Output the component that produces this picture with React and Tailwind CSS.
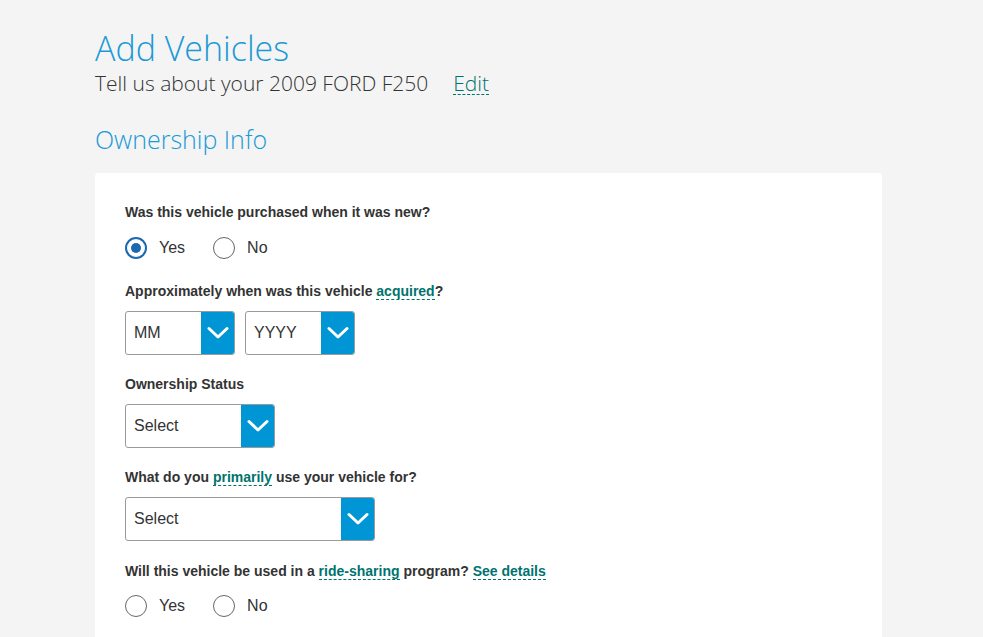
import { useState } from 'react';

function Chevron() {
  return (
    <svg width="22" height="14" viewBox="0 0 22 14" fill="none">
      <path d="M2 2.5l9 8.5 9-8.5" stroke="white" strokeWidth="3" strokeLinecap="round" strokeLinejoin="round" />
    </svg>
  );
}

function SelectBox({ placeholder, width }) {
  return (
    <div className={`flex h-[44px] ${width} overflow-hidden rounded-[3px] border border-[#9a9a9a] bg-white`}>
      <div className="flex flex-1 items-center pl-2 text-[16px] text-[#333]">{placeholder}</div>
      <div className="flex w-[33px] items-center justify-center bg-[#0096d6]">
        <Chevron />
      </div>
    </div>
  );
}

function Tip({ children }) {
  return (
    <span className="border-b border-dashed border-[#00736f] text-[#00736f]">{children}</span>
  );
}

function Radio({ checked, label, onClick }) {
  return (
    <button type="button" onClick={onClick} className="flex items-center gap-3">
      <span
        className={`flex h-[22px] w-[22px] items-center justify-center rounded-full bg-white ${
          checked ? 'border-2 border-[#1c68b3]' : 'border-[1.5px] border-[#666]'
        }`}
      >
        {checked && <span className="h-[10px] w-[10px] rounded-full bg-[#1c68b3]" />}
      </span>
      <span className="text-[16px] text-[#333]">{label}</span>
    </button>
  );
}

function RadioGroup({ value, onChange, className }) {
  return (
    <div className={`flex gap-[28px] ${className}`}>
      <Radio checked={value === 'yes'} label="Yes" onClick={() => onChange('yes')} />
      <Radio checked={value === 'no'} label="No" onClick={() => onChange('no')} />
    </div>
  );
}

function Label({ children }) {
  return <p className="text-[14px] font-bold leading-[16px] text-[#333]">{children}</p>;
}

export default function App() {
  const [isNew, setIsNew] = useState('yes');
  const [rideShare, setRideShare] = useState(null);

  return (
    <div className="min-h-screen bg-[#f4f4f4] font-['Liberation_Sans',Arial,sans-serif]">
      <div className="ml-[95px] w-[787px] pt-[28px]">
        <h1 className="font-['Open_Sans',sans-serif] text-[34px] font-light leading-[40px] text-[#1a9ad6]">
          Add Vehicles
        </h1>
        <p className="flex items-center font-['Open_Sans',sans-serif] text-[21px] font-light text-[#333]">
          Tell us about your 2009 FORD F250
          <span className="ml-[25px] border-b border-dashed border-[#00736f] leading-[22px] text-[#00736f]">Edit</span>
        </p>
        <h2 className="mt-[24px] font-['Open_Sans',sans-serif] text-[25px] font-light leading-[30px] text-[#1a9ad6]">
          Ownership Info
        </h2>

        <div className="mt-[19px] rounded-[4px] bg-white px-[30px] pt-[31px] pb-[40px]">
          <Label>Was this vehicle purchased when it was new?</Label>
          <RadioGroup className="mt-[16px]" value={isNew} onChange={setIsNew} />

          <div className="mt-[23px]">
            <Label>
              Approximately when was this vehicle <Tip>acquired</Tip>?
            </Label>
            <div className="mt-[12px] flex gap-[10px]">
              <SelectBox placeholder="MM" width="w-[110px]" />
              <SelectBox placeholder="YYYY" width="w-[110px]" />
            </div>
          </div>

          <div className="mt-[21px]">
            <Label>Ownership Status</Label>
            <div className="mt-[12px]">
              <SelectBox placeholder="Select" width="w-[150px]" />
            </div>
          </div>

          <div className="mt-[21px]">
            <Label>
              What do you <Tip>primarily</Tip> use your vehicle for?
            </Label>
            <div className="mt-[12px]">
              <SelectBox placeholder="Select" width="w-[250px]" />
            </div>
          </div>

          <div className="mt-[22px]">
            <Label>
              Will this vehicle be used in a <Tip>ride-sharing</Tip> program? <Tip>See details</Tip>
            </Label>
            <RadioGroup className="mt-[15px]" value={rideShare} onChange={setRideShare} />
          </div>
        </div>
      </div>
    </div>
  );
}
